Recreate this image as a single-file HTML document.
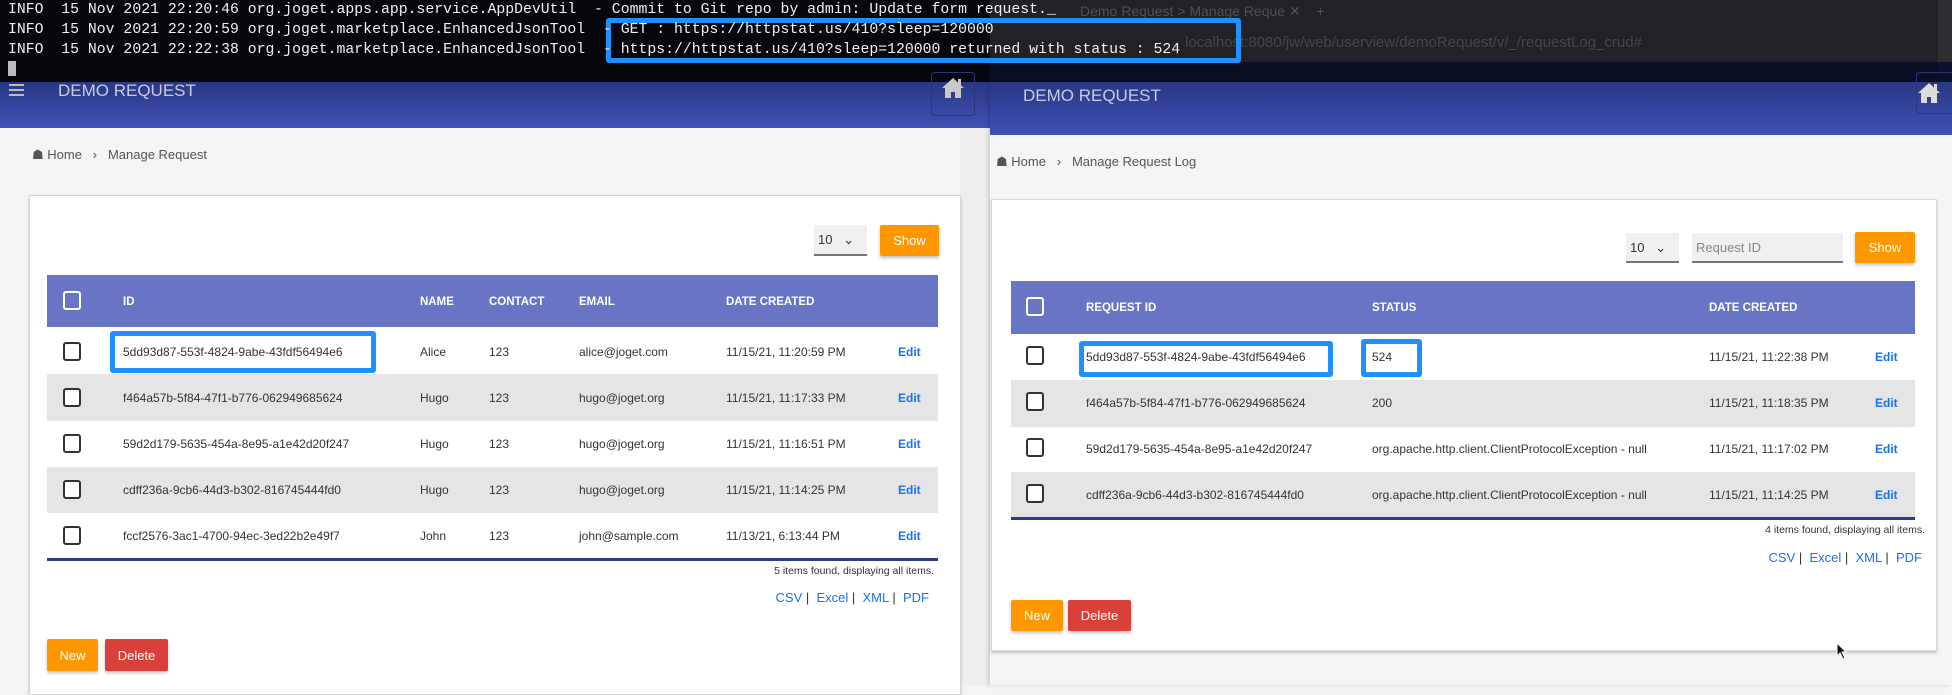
<!DOCTYPE html>
<html><head><meta charset="utf-8"><style>
*{box-sizing:border-box;margin:0;padding:0}
body{width:1952px;height:685px;overflow:hidden;background:#f4f4f4;font-family:"Liberation Sans",sans-serif;position:relative}
.abs{position:absolute;white-space:nowrap}
.hdr{background:linear-gradient(#2a3785,#3f51b5)}
.title{color:#c9cbe0;font-size:17px}
.card{background:#fff;border:1px solid #d8d8d8;box-shadow:0 2px 3px rgba(0,0,0,.2)}
.th{background:#6875c5;color:#fff;font-weight:bold;font-size:11.5px}
.row{font-size:12px;color:#333}
.cb{width:18px;height:19px;border:2px solid #333;border-radius:3px;background:#fff}
.cbw{border-color:#fff;background:transparent}
.edit{color:#1a73e8;font-weight:bold;font-size:12px}
.btn{color:#fff;font-size:13px;display:flex;align-items:center;justify-content:center;border-radius:2px;box-shadow:0 2px 3px rgba(0,0,0,.25)}
.or{background:#ff9800}.rd{background:#d9403a}
.hl{border:5px solid #1e90ff;border-radius:3px;background:#fff}
.term{font-family:"Liberation Mono",monospace;font-size:14.8px;color:#f0f0f0;white-space:pre;line-height:20px}
.lnk{color:#1a73e8;font-size:13px}
.sel{background:#f0f0f0;border-bottom:2px solid #777;font-size:13px;color:#333;padding:7px 4px}
</style></head><body>
<!-- right browser chrome -->
<div class="abs" style="left:990px;top:0;width:962px;height:62px;background:#2e2e30"></div>
<div class="abs" style="left:1080px;top:3px;color:#777;font-size:14px">Demo Request &gt; Manage Reque ✕ &nbsp;&nbsp; +</div>
<div class="abs" style="left:1185px;top:34px;color:#666;font-size:15px">localhost:8080/jw/web/userview/demoRequest/v/_/requestLog_crud#</div>
<div class="abs" style="left:990px;top:62px;width:962px;height:20px;background:#0c1128"></div>
<!-- terminal -->
<div class="abs" style="left:0;top:0;width:990px;height:82px;background:#06070d"></div>
<div class="abs" style="left:990px;top:0;width:948px;height:82px;background:rgba(8,10,22,.35);border-radius:0 0 8px 0"></div>
<div class="abs hl" style="left:606px;top:18px;width:635px;height:45px;background:transparent"></div>
<div class="abs term" style="left:8px;top:0px">INFO  15 Nov 2021 22:20:46 org.joget.apps.app.service.AppDevUtil  - Commit to Git repo by admin: Update form request._
INFO  15 Nov 2021 22:20:59 org.joget.marketplace.EnhancedJsonTool  - GET : https://httpstat.us/410?sleep=120000
INFO  15 Nov 2021 22:22:38 org.joget.marketplace.EnhancedJsonTool  - https://httpstat.us/410?sleep=120000 returned with status : 524</div>
<div class="abs" style="left:8px;top:61px;width:8px;height:15px;background:#bbb"></div>

<!-- LEFT APP -->
<div class="abs hdr" style="left:0;top:82px;width:990px;height:46px"></div>
<div class="abs" style="left:9px;top:84px;width:15px;height:12px;border-top:2px solid #bbb;border-bottom:2px solid #bbb"></div>
<div class="abs" style="left:9px;top:89px;width:15px;height:2px;background:#bbb"></div>
<div class="abs title" style="left:58px;top:81px">DEMO REQUEST</div>
<div class="abs" style="left:931px;top:72px;width:44px;height:44px;border:1px solid #2a3580;border-radius:4px"></div>
<svg class="abs" style="left:941px;top:77px" width="24" height="22" viewBox="0 0 24 22"><path d="M12 1 L1 11 L4 11 L4 21 L10 21 L10 15 L14 15 L14 21 L20 21 L20 11 L23 11 Z" fill="#c8c8c8"/><rect x="17" y="2" width="3" height="6" fill="#c8c8c8"/></svg>
<div class="abs" style="left:960px;top:128px;width:30px;height:557px;background:#eee"></div>
<div class="abs" style="left:32px;top:147px;font-size:13px;color:#555">☗ Home &nbsp;&nbsp;›&nbsp;&nbsp; Manage Request</div>
<div class="abs card" style="left:29px;top:195px;width:932px;height:500px"></div>
<div class="abs sel" style="left:814px;top:225px;width:53px;height:31px">10 &nbsp;&nbsp;⌄</div>
<div class="abs btn or" style="left:880px;top:225px;width:59px;height:31px">Show</div>
<div class="abs th" style="left:47px;top:275px;width:891px;height:52px"></div>
<div class="abs cb cbw" style="left:63px;top:291px"></div>
<div class="abs th" style="left:123px;top:296px;background:none">ID</div>
<div class="abs th" style="left:420px;top:296px;background:none">NAME</div>
<div class="abs th" style="left:489px;top:296px;background:none">CONTACT</div>
<div class="abs th" style="left:579px;top:296px;background:none">EMAIL</div>
<div class="abs th" style="left:726px;top:296px;background:none">DATE CREATED</div>
<div class="abs" style="left:47px;top:374px;width:891px;height:47px;background:#e5e5e5"></div>
<div class="abs" style="left:47px;top:467px;width:891px;height:46px;background:#e5e5e5"></div>
<div class="abs" style="left:47px;top:558px;width:891px;height:3px;background:#2c3a8f"></div>
<div class="abs hl" style="left:110px;top:331px;width:266px;height:42px"></div>
<div class="abs row" style="left:0;top:0">
<div class="abs cb" style="left:63px;top:342px"></div><div class="abs" style="left:123px;top:345px">5dd93d87-553f-4824-9abe-43fdf56494e6</div><div class="abs" style="left:420px;top:345px">Alice</div><div class="abs" style="left:489px;top:345px">123</div><div class="abs" style="left:579px;top:345px">alice@joget.com</div><div class="abs" style="left:726px;top:345px">11/15/21, 11:20:59 PM</div><div class="abs edit" style="left:898px;top:345px">Edit</div>
<div class="abs cb" style="left:63px;top:388px"></div><div class="abs" style="left:123px;top:391px">f464a57b-5f84-47f1-b776-062949685624</div><div class="abs" style="left:420px;top:391px">Hugo</div><div class="abs" style="left:489px;top:391px">123</div><div class="abs" style="left:579px;top:391px">hugo@joget.org</div><div class="abs" style="left:726px;top:391px">11/15/21, 11:17:33 PM</div><div class="abs edit" style="left:898px;top:391px">Edit</div>
<div class="abs cb" style="left:63px;top:434px"></div><div class="abs" style="left:123px;top:437px">59d2d179-5635-454a-8e95-a1e42d20f247</div><div class="abs" style="left:420px;top:437px">Hugo</div><div class="abs" style="left:489px;top:437px">123</div><div class="abs" style="left:579px;top:437px">hugo@joget.org</div><div class="abs" style="left:726px;top:437px">11/15/21, 11:16:51 PM</div><div class="abs edit" style="left:898px;top:437px">Edit</div>
<div class="abs cb" style="left:63px;top:480px"></div><div class="abs" style="left:123px;top:483px">cdff236a-9cb6-44d3-b302-816745444fd0</div><div class="abs" style="left:420px;top:483px">Hugo</div><div class="abs" style="left:489px;top:483px">123</div><div class="abs" style="left:579px;top:483px">hugo@joget.org</div><div class="abs" style="left:726px;top:483px">11/15/21, 11:14:25 PM</div><div class="abs edit" style="left:898px;top:483px">Edit</div>
<div class="abs cb" style="left:63px;top:526px"></div><div class="abs" style="left:123px;top:529px">fccf2576-3ac1-4700-94ec-3ed22b2e49f7</div><div class="abs" style="left:420px;top:529px">John</div><div class="abs" style="left:489px;top:529px">123</div><div class="abs" style="left:579px;top:529px">john@sample.com</div><div class="abs" style="left:726px;top:529px">11/13/21, 6:13:44 PM</div><div class="abs edit" style="left:898px;top:529px">Edit</div>
</div>
<div class="abs" style="left:700px;top:565px;width:234px;text-align:right;font-size:10.5px;color:#333">5 items found, displaying all items.</div>
<div class="abs lnk" style="left:700px;top:590px;width:229px;text-align:right">CSV <span style="color:#333">|</span> &nbsp;Excel <span style="color:#333">|</span> &nbsp;XML <span style="color:#333">|</span> &nbsp;PDF</div>
<div class="abs btn or" style="left:47px;top:639px;width:51px;height:32px">New</div>
<div class="abs btn rd" style="left:105px;top:639px;width:63px;height:32px">Delete</div>

<!-- RIGHT APP -->
<div class="abs" style="left:990px;top:82px;width:962px;height:603px;background:#f5f5f5;box-shadow:-2px 0 4px rgba(0,0,0,.15)"></div>
<div class="abs hdr" style="left:990px;top:82px;width:962px;height:53px"></div>
<div class="abs title" style="left:1023px;top:86px">DEMO REQUEST</div>
<div class="abs" style="left:1916px;top:72px;width:44px;height:42px;border:1px solid #2a3580;border-radius:4px"></div>
<svg class="abs" style="left:1917px;top:82px" width="24" height="22" viewBox="0 0 24 22"><path d="M12 1 L1 11 L4 11 L4 21 L10 21 L10 15 L14 15 L14 21 L20 21 L20 11 L23 11 Z" fill="#dcdcdc"/><rect x="17" y="2" width="3" height="6" fill="#dcdcdc"/></svg>
<div class="abs" style="left:996px;top:154px;font-size:13px;color:#555">☗ Home &nbsp;&nbsp;›&nbsp;&nbsp; Manage Request Log</div>
<div class="abs card" style="left:991px;top:199px;width:946px;height:452px"></div>
<div class="abs sel" style="left:1626px;top:233px;width:53px;height:30px">10 &nbsp;&nbsp;⌄</div>
<div class="abs sel" style="left:1692px;top:233px;width:151px;height:30px;color:#888">Request ID</div>
<div class="abs btn or" style="left:1855px;top:232px;width:60px;height:31px">Show</div>
<div class="abs th" style="left:1011px;top:281px;width:904px;height:53px"></div>
<div class="abs cb cbw" style="left:1026px;top:297px"></div>
<div class="abs th" style="left:1086px;top:302px;background:none">REQUEST ID</div>
<div class="abs th" style="left:1372px;top:302px;background:none">STATUS</div>
<div class="abs th" style="left:1709px;top:302px;background:none">DATE CREATED</div>
<div class="abs" style="left:1011px;top:380px;width:904px;height:47px;background:#e5e5e5"></div>
<div class="abs" style="left:1011px;top:472px;width:904px;height:46px;background:#e5e5e5"></div>
<div class="abs" style="left:1011px;top:517px;width:904px;height:3px;background:#2c3a8f"></div>
<div class="abs hl" style="left:1079px;top:341px;width:254px;height:36px"></div>
<div class="abs hl" style="left:1361px;top:339px;width:61px;height:38px"></div>
<div class="abs row" style="left:0;top:0">
<div class="abs cb" style="left:1026px;top:346px"></div><div class="abs" style="left:1086px;top:350px">5dd93d87-553f-4824-9abe-43fdf56494e6</div><div class="abs" style="left:1372px;top:350px">524</div><div class="abs" style="left:1709px;top:350px">11/15/21, 11:22:38 PM</div><div class="abs edit" style="left:1875px;top:350px">Edit</div>
<div class="abs cb" style="left:1026px;top:392px"></div><div class="abs" style="left:1086px;top:396px">f464a57b-5f84-47f1-b776-062949685624</div><div class="abs" style="left:1372px;top:396px">200</div><div class="abs" style="left:1709px;top:396px">11/15/21, 11:18:35 PM</div><div class="abs edit" style="left:1875px;top:396px">Edit</div>
<div class="abs cb" style="left:1026px;top:438px"></div><div class="abs" style="left:1086px;top:442px">59d2d179-5635-454a-8e95-a1e42d20f247</div><div class="abs" style="left:1372px;top:442px">org.apache.http.client.ClientProtocolException - null</div><div class="abs" style="left:1709px;top:442px">11/15/21, 11:17:02 PM</div><div class="abs edit" style="left:1875px;top:442px">Edit</div>
<div class="abs cb" style="left:1026px;top:484px"></div><div class="abs" style="left:1086px;top:488px">cdff236a-9cb6-44d3-b302-816745444fd0</div><div class="abs" style="left:1372px;top:488px">org.apache.http.client.ClientProtocolException - null</div><div class="abs" style="left:1709px;top:488px">11/15/21, 11:14:25 PM</div><div class="abs edit" style="left:1875px;top:488px">Edit</div>
</div>
<div class="abs" style="left:1680px;top:524px;width:245px;text-align:right;font-size:10.5px;color:#333">4 items found, displaying all items.</div>
<div class="abs lnk" style="left:1680px;top:550px;width:242px;text-align:right">CSV <span style="color:#333">|</span> &nbsp;Excel <span style="color:#333">|</span> &nbsp;XML <span style="color:#333">|</span> &nbsp;PDF</div>
<div class="abs btn or" style="left:1011px;top:600px;width:52px;height:31px">New</div>
<div class="abs btn rd" style="left:1068px;top:600px;width:63px;height:31px">Delete</div>
<svg class="abs" style="left:1836px;top:642px" width="12" height="18" viewBox="0 0 12 18"><path d="M1 1 L1 14 L4 11 L7 17 L9 16 L6 10 L10 10 Z" fill="#111" stroke="#fff" stroke-width="1"/></svg>
</body></html>
